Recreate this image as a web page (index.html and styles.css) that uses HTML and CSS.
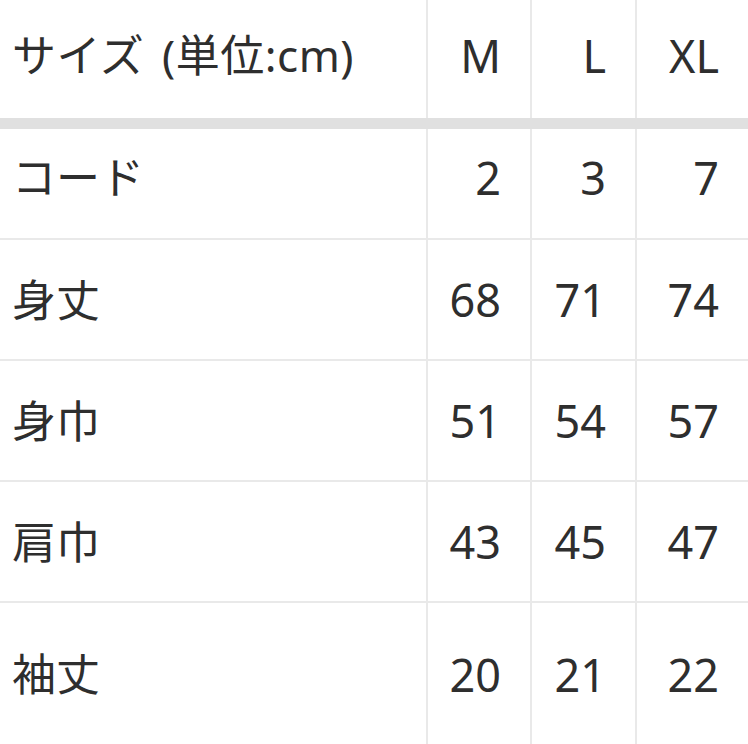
FILE: index.html
```html
<!DOCTYPE html>
<html lang="ja">
<head>
<meta charset="utf-8">
<title>サイズ表</title>
<link rel="stylesheet" href="styles.css">
</head>
<body>
<div class="size-table">
  <div class="row head">
    <div class="cell label">サイズ (単位:cm)</div>
    <div class="cell num">M</div>
    <div class="cell num">L</div>
    <div class="cell num">XL</div>
  </div>
  <div class="row first">
    <div class="cell label">コード</div>
    <div class="cell num">2</div>
    <div class="cell num">3</div>
    <div class="cell num">7</div>
  </div>
  <div class="row">
    <div class="cell label">身丈</div>
    <div class="cell num">68</div>
    <div class="cell num">71</div>
    <div class="cell num">74</div>
  </div>
  <div class="row">
    <div class="cell label">身巾</div>
    <div class="cell num">51</div>
    <div class="cell num">54</div>
    <div class="cell num">57</div>
  </div>
  <div class="row">
    <div class="cell label">肩巾</div>
    <div class="cell num">43</div>
    <div class="cell num">45</div>
    <div class="cell num">47</div>
  </div>
  <div class="row last">
    <div class="cell label">袖丈</div>
    <div class="cell num">20</div>
    <div class="cell num">21</div>
    <div class="cell num">22</div>
  </div>
</div>
</body>
</html>
```
FILE: styles.css
```css
html, body {
  margin: 0;
  padding: 0;
  background: #ffffff;
  overflow: hidden;
}

body {
  width: 748px;
  height: 744px;
  font-family: "Noto Sans", "Noto Sans CJK JP", sans-serif;
  color: #2e2e2e;
}

.size-table {
  display: flex;
  flex-direction: column;
  width: 748px;
}

.row {
  display: grid;
  grid-template-columns: 426px 104px 105px 113px;
  height: 119px;
  border-bottom: 2px solid #e9e9e9;
}

.row.head {
  height: 118px;
  border-bottom: 11px solid #e0e0e0;
}

.row.first {
  height: 109px;
}

.row.first .cell {
  padding-bottom: 13px;
}

.row.last {
  height: 142px;
  border-bottom: none;
}

.cell {
  display: flex;
  align-items: center;
  font-size: 44px;
  line-height: 1;
  box-sizing: border-box;
}

.cell.label {
  padding-left: 12px;
}

.row.head .cell.label {
  letter-spacing: 0.5px;
  word-spacing: 6px;
}

.cell.num {
  justify-content: flex-end;
  padding-right: 29px;
  border-left: 2px solid #e9e9e9;
  font-size: 45px;
}

.row.head .cell {
  padding-bottom: 8px;
}
```
